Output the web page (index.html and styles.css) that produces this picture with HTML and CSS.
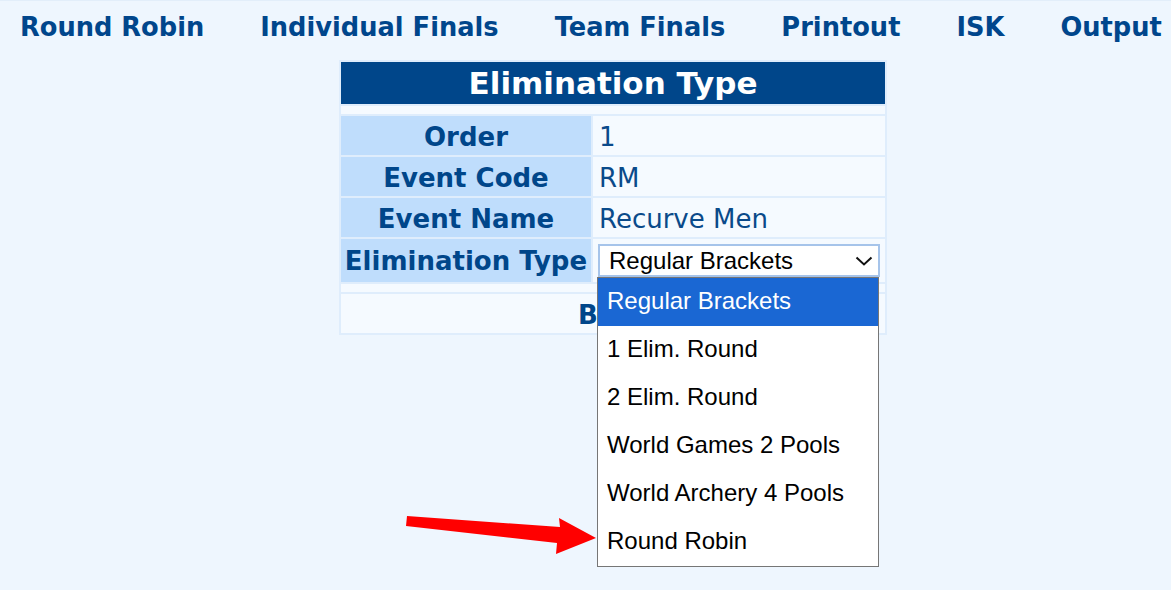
FILE: index.html
```html
<!DOCTYPE html>
<html>
<head>
<meta charset="utf-8">
<link rel="stylesheet" href="styles.css">
</head>
<body>
<nav class="nav">
  <a>Round Robin</a>
  <a>Individual Finals</a>
  <a>Team Finals</a>
  <a>Printout</a>
  <a>ISK</a>
  <a>Output</a>
</nav>
<main class="main">
  <table class="form">
    <colgroup><col class="col-label"><col class="col-value"></colgroup>
    <tr><th colspan="2" class="title">Elimination Type</th></tr>
    <tr class="spacer"><td colspan="2"></td></tr>
    <tr class="row"><td class="label">Order</td><td class="value">1</td></tr>
    <tr class="row"><td class="label">Event Code</td><td class="value">RM</td></tr>
    <tr class="row"><td class="label">Event Name</td><td class="value">Recurve Men</td></tr>
    <tr class="row-sel">
      <td class="label">Elimination Type</td>
      <td class="value sel-cell">
        <div class="select-wrap">
          <div class="select">
            <span>Regular Brackets</span>
            <svg class="chev" width="18" height="10" viewBox="0 0 18 10"><polyline points="1.5,1.5 9,8.5 16.5,1.5" fill="none" stroke="#111" stroke-width="2"/></svg>
          </div>
          <ul class="popup">
            <li class="active">Regular Brackets</li>
            <li>1 Elim. Round</li>
            <li>2 Elim. Round</li>
            <li>World Games 2 Pools</li>
            <li>World Archery 4 Pools</li>
            <li>Round Robin</li>
          </ul>
        </div>
      </td>
    </tr>
    <tr class="spacer"><td colspan="2"></td></tr>
    <tr class="row"><td colspan="2" class="button-cell">Back</td></tr>
  </table>
</main>
<svg class="arrow" width="200" height="42" viewBox="0 0 200 42">
  <polygon points="2,2 155,13 154,4 191,24 151,40 152,29 1,12" fill="#ff0000"/>
</svg>
</body>
</html>
```
FILE: styles.css
```css
html, body {
  margin: 0;
  padding: 0;
  background: #eef6fe;
}
body {
  width: 1171px;
  height: 590px;
  overflow: hidden;
  position: relative;
  border-top: 1px solid #e2eefa;
  box-sizing: border-box;
  font-family: "DejaVu Sans", Verdana, sans-serif;
}
.nav {
  display: flex;
  gap: 56px;
  padding: 9px 0 0 20px;
  height: 50px;
  box-sizing: content-box;
  white-space: nowrap;
}
.nav a {
  font-weight: bold;
  font-size: 25.7px;
  line-height: 34px;
  color: #00468c;
}
.main {
  padding-left: 339px;
}
.form {
  border-collapse: separate;
  border-spacing: 2px;
  background: #dfedfc;
  width: 548px;
  table-layout: fixed;
}
.col-label {
  width: 250px;
}
.title {
  background: #00468a;
  color: #ffffff;
  font-size: 31px;
  font-weight: bold;
  height: 42px;
  padding: 0;
  line-height: 42px;
}
.spacer td {
  height: 8px;
  padding: 0;
  background: #f5faff;
}
.label {
  background: #bfddfc;
  color: #00468a;
  font-weight: bold;
  font-size: 26px;
  text-align: center;
  padding: 0;
  white-space: nowrap;
}
.value {
  background: #f5faff;
  color: #0a4a8a;
  font-size: 26px;
  padding: 0 0 0 6px;
}
.row td {
  line-height: 36px;
  padding-top: 3px;
  padding-bottom: 0;
}
.row-sel td {
  height: 43px;
}
.sel-cell {
  padding: 0 5px;
}
.select-wrap {
  position: relative;
}
.select {
  height: 33px;
  box-sizing: border-box;
  border: 2px solid #a6c4ea;
  background: #ffffff;
  display: flex;
  align-items: center;
  justify-content: space-between;
  padding: 0 5px 0 9px;
  font-family: "Liberation Sans", Arial, sans-serif;
  font-size: 24px;
  color: #000;
}
.chev {
  display: block;
  margin-top: 1px;
}
.button-cell {
  background: #f5faff;
  color: #00468a;
  font-weight: bold;
  font-size: 26px;
  text-align: center;
}
.popup {
  position: absolute;
  left: -1px;
  top: 33px;
  width: 282px;
  margin: 0;
  padding: 0;
  list-style: none;
  background: #ffffff;
  border: 1px solid #767676;
  box-sizing: border-box;
  font-family: "Liberation Sans", Arial, sans-serif;
  font-size: 24px;
  color: #000;
  z-index: 2;
}
.popup li {
  height: 48px;
  line-height: 46px;
  padding-left: 9px;
  box-sizing: border-box;
}
.popup li.active {
  background: #1a67d3;
  color: #ffffff;
}
.arrow {
  position: absolute;
  left: 405px;
  top: 513px;
  z-index: 3;
}
```
